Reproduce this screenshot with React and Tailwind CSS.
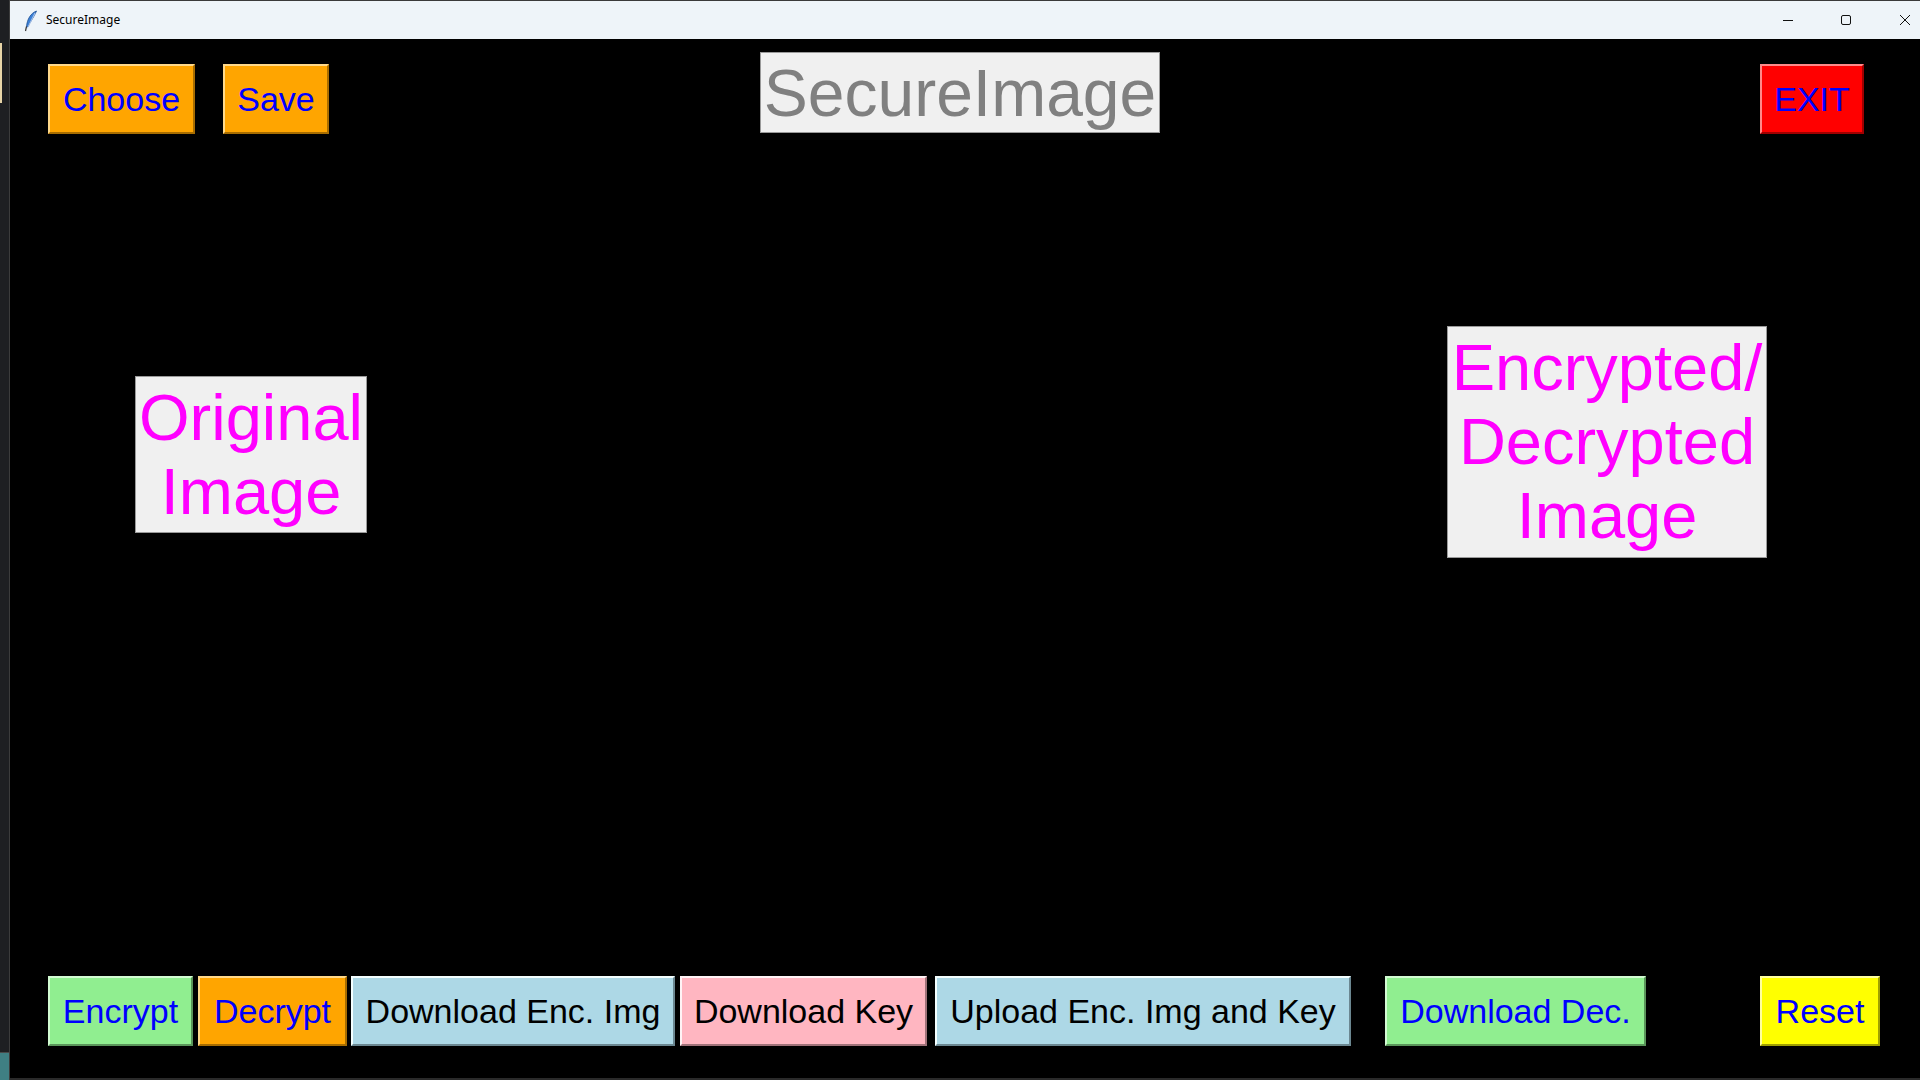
import React from 'react';

const FONT = { fontFamily: '"Liberation Sans", Arial, sans-serif' };

// raised tk-style buttons; each tone gets its own light/dark edges
const TONES = {
  orange: 'bg-[#ffa500] border-t-[#ffd98a] border-l-[#ffd98a] border-b-[#a86d00] border-r-[#a86d00]',
  red: 'bg-[#ff0000] border-t-[#ff8a8a] border-l-[#ff8a8a] border-b-[#a00000] border-r-[#a00000]',
  green: 'bg-[#90ee90] border-t-[#d2fbd2] border-l-[#d2fbd2] border-b-[#5a955a] border-r-[#5a955a]',
  blue: 'bg-[#add8e6] border-t-[#f4ffff] border-l-[#f4ffff] border-b-[#6b8791] border-r-[#6b8791]',
  pink: 'bg-[#ffb6c1] border-t-[#fff4f6] border-l-[#fff4f6] border-b-[#a07279] border-r-[#a07279]',
  yellow: 'bg-[#ffff00] border-t-[#ffffa0] border-l-[#ffffa0] border-b-[#a0a000] border-r-[#a0a000]',
};

function TkButton({ label, tone, ink = 'text-[#0000ff]', className = '' }) {
  return (
    <button
      style={FONT}
      className={`h-[70px] shrink-0 border-2 border-solid flex items-center justify-center text-[34px] leading-none ${TONES[tone]} ${ink} ${className}`}
    >
      {label}
    </button>
  );
}

function Feather() {
  return (
    <svg width="14" height="22" viewBox="0 0 14 22">
      <path d="M12.5 1 C7 3 3 9 2.5 17 L4 17 C6 12 10 7 12.5 1 Z" fill="#3b7fd4" stroke="#1d4f94" strokeWidth="0.8" />
      <path d="M11 3 L3 19" stroke="#cfe2ff" strokeWidth="0.8" />
      <path d="M2.5 16.5 L1.5 21" stroke="#333" strokeWidth="1.2" />
    </svg>
  );
}

function TitleBar() {
  return (
    <div className="h-[39px] shrink-0 bg-[#eef4f9] flex items-center border-t border-[#3a3a3a]">
      <div className="ml-[14px] mt-[1px]">
        <Feather />
      </div>
      <span
        className="ml-[8px] text-[12px] text-black"
        style={{ fontFamily: '"Noto Sans", "Open Sans", sans-serif' }}
      >
        SecureImage
      </span>
      <div className="ml-auto flex items-center h-full">
        <div className="w-[30px] h-full flex items-center justify-center">
          <svg width="12" height="12" viewBox="0 0 12 12">
            <path d="M1 6.5 H11" stroke="#111" strokeWidth="1" />
          </svg>
        </div>
        <div className="ml-[28px] w-[30px] h-full flex items-center justify-center">
          <svg width="12" height="12" viewBox="0 0 12 12">
            <rect x="1.5" y="1.5" width="9" height="9" rx="1.5" fill="none" stroke="#111" strokeWidth="1" />
          </svg>
        </div>
        <div className="ml-[29px] w-[30px] h-full flex items-center justify-center">
          <svg width="12" height="12" viewBox="0 0 12 12">
            <path d="M1 1 L11 11 M11 1 L1 11" stroke="#111" strokeWidth="1" />
          </svg>
        </div>
      </div>
    </div>
  );
}

function Panel({ lines, className = '' }) {
  return (
    <div
      style={FONT}
      className={`shrink-0 bg-[#f0f0f0] border border-[#9a9a9a] flex flex-col items-center justify-center text-[#ff00ff] text-[65px] leading-[74px] whitespace-nowrap ${className}`}
    >
      {lines.map((l) => (
        <span key={l}>{l}</span>
      ))}
    </div>
  );
}

export default function App() {
  return (
    <div className="w-[1920px] h-[1080px] flex bg-[#1e1f22] overflow-hidden">
      {/* desktop sliver to the left of the window */}
      <div className="w-[9px] shrink-0 flex flex-col">
        <div className="h-[43px]" />
        <div className="h-[60px] w-[2px] bg-[#e6d3a6]" />
        <div className="flex-1" />
        <div className="h-[1px] bg-[#4a4a4a]" />
        <div className="h-[27px] bg-[#3f7f83]" />
      </div>

      <div className="flex-1 flex flex-col border-l border-[#3c3c3c]">
        <TitleBar />

        <div className="flex-1 bg-black flex flex-col border-b-2 border-[#2a2a2a]">
          {/* top row */}
          <div className="flex items-start">
            <TkButton label="Choose" tone="orange" className="w-[147px] ml-[38px] mt-[25px]" />
            <TkButton label="Save" tone="orange" className="w-[106px] ml-[28px] mt-[25px]" />
            <div
              style={FONT}
              className="ml-[431px] mt-[13px] w-[400px] h-[81px] bg-[#f0f0f0] border border-[#9a9a9a] flex items-center justify-center text-[66px] leading-none text-[#808080]"
            >
              SecureImage
            </div>
            <TkButton label="EXIT" tone="red" className="w-[104px] ml-[600px] mt-[25px]" />
          </div>

          {/* image placeholders */}
          <div className="flex items-start">
            <Panel lines={['Original', 'Image']} className="w-[232px] h-[157px] ml-[125px] mt-[242px]" />
            <Panel
              lines={['Encrypted/', 'Decrypted', 'Image']}
              className="w-[320px] h-[232px] ml-[1080px] mt-[192px]"
            />
          </div>

          {/* bottom action row */}
          <div className="mt-auto mb-[32px] flex items-center">
            <TkButton label="Encrypt" tone="green" className="w-[145px] ml-[38px]" />
            <TkButton label="Decrypt" tone="orange" className="w-[149px] ml-[5px]" />
            <TkButton label="Download Enc. Img" tone="blue" ink="text-black" className="w-[324px] ml-[4px]" />
            <TkButton label="Download Key" tone="pink" ink="text-black" className="w-[247px] ml-[5px]" />
            <TkButton label="Upload Enc. Img and Key" tone="blue" ink="text-black" className="w-[416px] ml-[8px]" />
            <TkButton label="Download Dec." tone="green" className="w-[261px] ml-[34px]" />
            <TkButton label="Reset" tone="yellow" className="w-[120px] ml-[114px]" />
          </div>
        </div>
      </div>
    </div>
  );
}
